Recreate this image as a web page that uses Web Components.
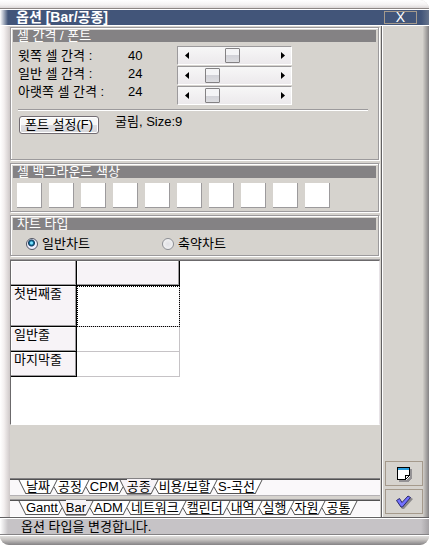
<!DOCTYPE html>
<html lang="ko">
<head>
<meta charset="utf-8">
<meta name="viewport" content="width=device-width, initial-scale=1">
<title>옵션 [Bar/공종]</title>
<style>
  body {
    margin: 0;
    background: #fff;
    color: #000;
    font: 13px/18px "Liberation Sans", "Noto Sans CJK KR", sans-serif;
  }
</style>
</head>
<body>
<option-window caption="옵션 [Bar/공종]" status="옵션 타입을 변경합니다.">
  <option-group caption="셀 간격 / 폰트"><spacing-panel></spacing-panel></option-group>
  <option-group caption="셀 백그라운드 색상"><color-swatches count="10"></color-swatches></option-group>
  <option-group caption="차트 타입"><chart-type></chart-type></option-group>
  <row-grid></row-grid>
  <sheet-tabs slot="tabs" tabs="날짜,공정,CPM,공종,비용/보할,S-곡선" active="3"></sheet-tabs>
  <sheet-tabs slot="tabs" tabs="Gantt,Bar,ADM,네트워크,캘린더,내역,실행,자원,공통" active="1"></sheet-tabs>
</option-window>

<script>
// Window frame: title bar, main area, side buttons and status bar
class OptionWindow extends HTMLElement {
  constructor() {
    super();
    this.attachShadow({ mode: "open" });
    this.shadowRoot.innerHTML = `
      <style>
        :host {
          display: flex;
          flex-direction: column;
          box-sizing: border-box;
          min-height: calc(100vh - 1px);
          margin-right: 1px;
          border-radius: 0 9px 9px 9px;
          overflow: hidden;
          background: #d6d3ce;
        }
        .top {
          height: 8px;
          background: linear-gradient(#fff, #f4f2f2 60%, #dcd8d8);
          border-bottom: 1px solid #8c8684;
        }
        header {
          display: flex;
          align-items: center;
          justify-content: space-between;
          height: 15px;
          padding: 0 12px 0 16px;
          border-top: 1px solid #fff;
          border-bottom: 1px solid #fff;
          background: linear-gradient(90deg, #fff, #425579 8px, #425579 calc(100% - 8px), #66748c);
          color: #fff;
        }
        h1 {
          margin: 0;
          font-size: 14px;
          line-height: 15px;
          font-weight: bold;
        }
        header button {
          width: 33px;
          height: 13px;
          padding: 0;
          border: 1px solid #a59a8c;
          background: none;
          color: #fff;
          font: 14px/11px "Liberation Sans", sans-serif;
        }
        .middle {
          display: flex;
          flex: 1;
        }
        .left {
          width: 10px;
          background: linear-gradient(90deg, #fff, #f4f0f0 40%, #cec8c8);
        }
        .right {
          width: 6px;
          background: linear-gradient(90deg, #d0cdc8, #848284);
        }
        .main {
          display: flex;
          flex-direction: column;
          flex: 1;
          min-width: 0;
        }
        .pages {
          display: flex;
          flex-direction: column;
          gap: 3px;
          flex: 1;
          padding-top: 1px;
        }
        aside {
          display: flex;
          flex-direction: column;
          justify-content: flex-end;
          gap: 3px;
          width: 38px;
          padding: 0 0 3px 3px;
          margin-left: 1px;
          border-left: 1px solid #636163;
          box-shadow: inset 1px 0 #fff;
        }
        aside button {
          display: flex;
          align-items: center;
          justify-content: center;
          height: 25px;
          padding: 0;
          border: 1px solid #a59a8c;
          background: #d6d3ce;
        }
        footer {
          height: 16px;
          padding-left: 21px;
          border-top: 1px solid #636163;
          border-bottom: 1px solid #848284;
          box-shadow: inset 0 1px #fff;
          background: linear-gradient(90deg, #fff, #c6c3c6 8px, #c6c3c6 calc(100% - 8px), #a5a2a5);
          line-height: 17px;
        }
        .bottom {
          height: 10px;
          border-top: 1px solid #fff;
          box-sizing: border-box;
          background: linear-gradient(#e0dedc, #c6c3c1 40%, #848284);
        }
      </style>
      <div class="top"></div>
      <header><h1></h1><button type="button" aria-label="닫기">X</button></header>
      <div class="middle">
        <div class="left"></div>
        <div class="main">
          <div class="pages"><slot></slot></div>
          <slot name="tabs"></slot>
        </div>
        <aside>
          <button type="button" aria-label="새로 만들기">
            <svg width="16" height="16" viewBox="0 0 16 16" shape-rendering="crispEdges">
              <path d="M3 3h13v9l-4 4H3z" fill="#949294"/>
              <path d="M1 1h13v9l-4 4H1z" fill="#fff"/>
              <path d="M1 1h13v1H1z"/>
              <path d="M2 2h11v2H2z" fill="#299ede"/>
              <path d="M1 1h1v13H1zM13 1h1v9h-1zM1 13h9v1H1zM9 9h5v1H9zM9 9h1v5H9zM12 10h1v1h-1zM11 11h1v1h-1zM10 12h1v1h-1z"/>
            </svg>
          </button>
          <button type="button" aria-label="적용">
            <svg width="18" height="16" viewBox="0 0 18 16">
              <path d="M3 9l3-2 2 3 7-7 3 2-9 10H7z" fill="#8c8a8c"/>
              <path d="M1.500 6.500l3-2 2.500 4 6-6.500 2.500 1.500L7.500 13H6z" fill="#7371ff" stroke="#29286b"/>
            </svg>
          </button>
        </aside>
        <div class="right"></div>
      </div>
      <footer role="status"></footer>
      <div class="bottom"></div>
    `;
  }

  connectedCallback() {
    this.shadowRoot.querySelector("h1").textContent = this.getAttribute("caption");
    this.shadowRoot.querySelector("footer").textContent = this.getAttribute("status");
  }
}

// Etched box with a gray caption bar
class OptionGroup extends HTMLElement {
  constructor() {
    super();
    this.attachShadow({ mode: "open" });
    this.shadowRoot.innerHTML = `
      <style>
        :host {
          display: block;
          padding: 2px;
          border: 1px solid #9c9a9c;
          box-shadow: inset 1px 1px #fff, 1px 1px #fff;
          margin-right: 1px;
        }
        h2 {
          margin: 0;
          height: 12px;
          padding-left: 4px;
          background: #848284;
          color: #fff;
          font-size: 13px;
          font-weight: normal;
          line-height: 12px;
        }
      </style>
      <h2></h2>
      <slot></slot>
    `;
  }

  connectedCallback() {
    this.shadowRoot.querySelector("h2").textContent = this.getAttribute("caption");
  }
}

// Spacing sliders and the font button
class SpacingPanel extends HTMLElement {
  constructor() {
    super();
    this.attachShadow({ mode: "open" });

    const rows = [
      { id: "top", label: "윗쪽 셀 간격 :", value: 40 },
      { id: "normal", label: "일반 셀 간격 :", value: 24 },
      { id: "bottom", label: "아랫쪽 셀 간격 :", value: 24 },
    ];

    this.shadowRoot.innerHTML = `
      <style>
        :host {
          display: block;
          padding: 4px 8px 23px 5px;
        }
        .spacing {
          display: grid;
          grid-template-columns: 159px 115px;
        }
        .labels {
          padding-top: 1px;
        }
        .row {
          display: grid;
          grid-template-columns: 110px auto;
        }
        .bars {
          display: grid;
          grid-template-columns: minmax(0, 1fr);
          gap: 1px;
        }
        .bar {
          display: flex;
          height: 17px;
          border: 1px solid;
          border-color: #9c9a9c #fff #fff #9c9a9c;
          background: linear-gradient(#f7f7f7, #ece9ec);
        }
        .bar button {
          width: 17px;
          padding: 0;
          border: 0;
          background: none;
          line-height: 0;
        }
        input {
          appearance: none;
          flex: 1;
          min-width: 0;
          height: 17px;
          margin: 0;
          background: none;
        }
        input::-webkit-slider-thumb {
          appearance: none;
          box-sizing: border-box;
          width: 15px;
          height: 15px;
          border: 1px solid #848284;
          border-radius: 1px;
          background: linear-gradient(#f4f4f6 50%, #d2d2d8 50%, #dedee2);
        }
        hr {
          margin: 4px 0 5px;
          border: 0;
          height: 1px;
          background: #9c9a9c;
          border-bottom: 1px solid #fff;
        }
        .font {
          display: flex;
          gap: 16px;
          line-height: 11px;
        }
        .font button {
          height: 18px;
          width: 80px;
          padding: 0;
          margin-left: 1px;
          border: 1px solid #736d73;
          border-radius: 3px;
          background: linear-gradient(#f7f7f7 50%, #dedee2 50%, #d6d6da);
          box-shadow: inset 0 0 0 1px #fff;
          color: #000;
          font: inherit;
          line-height: 16px;
        }
      </style>
      <div class="spacing">
        <div class="labels">
          ${rows.map((r) => `
          <div class="row"><label for="${r.id}">${r.label}</label><output for="${r.id}">${r.value}</output></div>`).join("")}
        </div>
        <div class="bars">
          ${rows.map((r) => `
          <div class="bar">
            <button type="button" data-step="-1" aria-label="감소"><svg width="4" height="7"><path d="M4 0v7L0 3.500z"/></svg></button>
            <input type="range" id="${r.id}" min="16" max="68" value="${r.value}">
            <button type="button" data-step="1" aria-label="증가"><svg width="4" height="7"><path d="M0 0v7L4 3.500z"/></svg></button>
          </div>`).join("")}
        </div>
      </div>
      <hr>
      <div class="font"><button type="button">폰트 설정(F)</button><span>굴림, Size:9</span></div>
    `;
  }

  connectedCallback() {
    this.shadowRoot.querySelectorAll("input").forEach((input) => {
      const output = this.shadowRoot.querySelector(`output[for="${input.id}"]`);
      input.addEventListener("input", () => {
        output.textContent = input.value;
      });
      input.parentElement.querySelectorAll("button").forEach((button) => {
        button.addEventListener("click", () => {
          input.value = Number(input.value) + Number(button.dataset.step);
          output.textContent = input.value;
        });
      });
    });
  }
}

class ColorSwatches extends HTMLElement {
  constructor() {
    super();
    this.attachShadow({ mode: "open" });
  }

  connectedCallback() {
    let buttons = "";
    for (let i = 1; i <= Number(this.getAttribute("count")); i++) {
      buttons += `<button type="button" aria-label="색상 ${i}"></button>`;
    }
    this.shadowRoot.innerHTML = `
      <style>
        :host {
          display: flex;
          flex-wrap: wrap;
          gap: 7px;
          padding: 5px 4px 1px;
        }
        button {
          box-sizing: border-box;
          width: 25px;
          height: 25px;
          padding: 0;
          border: 0 solid #9c9a9c;
          border-width: 0 1px 1px 0;
          background: #fff;
        }
      </style>
      ${buttons}
    `;
  }
}

class ChartType extends HTMLElement {
  constructor() {
    super();
    this.attachShadow({ mode: "open" });
    this.shadowRoot.innerHTML = `
      <style>
        :host {
          display: grid;
          grid-template-columns: 136px auto;
          padding: 5px 13px 0;
        }
        label {
          display: flex;
          align-items: center;
          gap: 4px;
        }
        input {
          appearance: none;
          box-sizing: border-box;
          width: 12px;
          height: 12px;
          margin: 0;
          border: 1px solid #8c8e94;
          border-radius: 50%;
          background: radial-gradient(#e0e0e4, #f8f8f8);
        }
        input:checked {
          border-color: #525563;
          background: radial-gradient(circle at 45% 40%, #7be3ff 0 1px, #106d9c 2px, #103c5a 3px, #eef 4px);
        }
      </style>
      <label><input type="radio" name="chart" checked>일반차트</label>
      <label><input type="radio" name="chart">축약차트</label>
    `;
  }
}

// Row preview table
class RowGrid extends HTMLElement {
  constructor() {
    super();
    this.attachShadow({ mode: "open" });
    this.shadowRoot.innerHTML = `
      <style>
        :host {
          display: block;
          min-height: 163px;
          margin-top: 1px;
          border: 1px solid;
          border-color: #6b696b #e7e3e7 #fff #6b696b;
          box-shadow: 0 -1px #9c9a9c;
          background: #fff;
        }
        table {
          width: 169px;
          table-layout: fixed;
          border-collapse: separate;
          border-spacing: 0;
          background: #fff;
        }
        th, td {
          box-sizing: border-box;
          height: 25px;
          padding: 0;
          border: 0 solid #c6c3c6;
          border-width: 0 1px 1px 0;
        }
        th {
          padding-left: 3px;
          border-color: #000;
          background: #f7f3f7;
          box-shadow: inset -1px -1px #9c9a9c, inset 1px 1px #fff;
          font-weight: normal;
          line-height: 15px;
          text-align: left;
          vertical-align: top;
        }
        .first {
          height: 41px;
        }
        td:focus-visible, .current {
          outline: 1px dotted #000;
          outline-offset: -1px;
        }
      </style>
      <table>
        <colgroup><col style="width: 66px"><col></colgroup>
        <tr><th></th><th></th></tr>
        <tr><th class="first" scope="row">첫번째줄</th><td class="current"></td></tr>
        <tr><th scope="row">일반줄</th><td></td></tr>
        <tr><th scope="row">마지막줄</th><td></td></tr>
      </table>
    `;
  }
}

// Strip of slanted sheet tabs
class SheetTabs extends HTMLElement {
  constructor() {
    super();
    this.attachShadow({ mode: "open" });
  }

  connectedCallback() {
    this.names = this.getAttribute("tabs").split(",");
    this.render(Number(this.getAttribute("active")));
  }

  edge(index, active) {
    const last = index === this.names.length;
    let lines = "M0 14L7 0M4 7L8 14";
    if (index === 0) lines = "M1 0L8 14";
    else if (last) lines = "M0 14L7 0";
    else if (index === active) lines = "M1 0L8 14M0 14L4 7";
    const left = index === 0 ? "" : `<path d="M0 0H7L0 14z" fill="${index - 1 === active ? "#f7f3f7" : "#fff"}"/>`;
    const right = last ? "" : `<path d="M1 0H8V14z" fill="${index === active ? "#f7f3f7" : "#fff"}"/>`;
    const fills = index === active ? left + right : right + left;
    return `<svg width="8" height="14" viewBox="0 0 8 14">${fills}<path d="${lines}" fill="none" stroke="#525152"/></svg>`;
  }

  render(active) {
    this.shadowRoot.innerHTML = `
      <style>
        :host {
          display: block;
          height: 16px;
          border-top: 1px solid #848284;
          border-bottom: 1px solid #b5b2b5;
          background: #faf8fa;
          box-shadow: inset 0 1px #525152;
        }
        :host(:last-of-type) {
          border-color: #9c9a9c #d6d3ce #fff;
          margin-top: 3px;
        }
        div {
          display: flex;
          padding: 1px 0 0 8px;
        }
        svg {
          flex: none;
        }
        button {
          box-sizing: border-box;
          height: 14px;
          padding: 0;
          border: 0;
          border-bottom: 1px solid #525152;
          background: #fff;
          color: #000;
          font: inherit;
          line-height: 13px;
          white-space: nowrap;
        }
        button[aria-selected="true"] {
          background: #f7f3f7;
          box-shadow: 0 -1px #f7f3f7, 0 1px #9c9a9c;
        }
      </style>
      <div role="tablist">
        ${this.names.map((name, i) => `${this.edge(i, active)}<button type="button" role="tab" aria-selected="${i === active}">${name}</button>`).join("")}${this.edge(this.names.length, active)}
      </div>
    `;
    this.shadowRoot.querySelectorAll("button").forEach((button, i) => {
      button.addEventListener("click", () => this.render(i));
    });
  }
}

customElements.define("option-window", OptionWindow);
customElements.define("option-group", OptionGroup);
customElements.define("spacing-panel", SpacingPanel);
customElements.define("color-swatches", ColorSwatches);
customElements.define("chart-type", ChartType);
customElements.define("row-grid", RowGrid);
customElements.define("sheet-tabs", SheetTabs);
</script>
</body>
</html>
